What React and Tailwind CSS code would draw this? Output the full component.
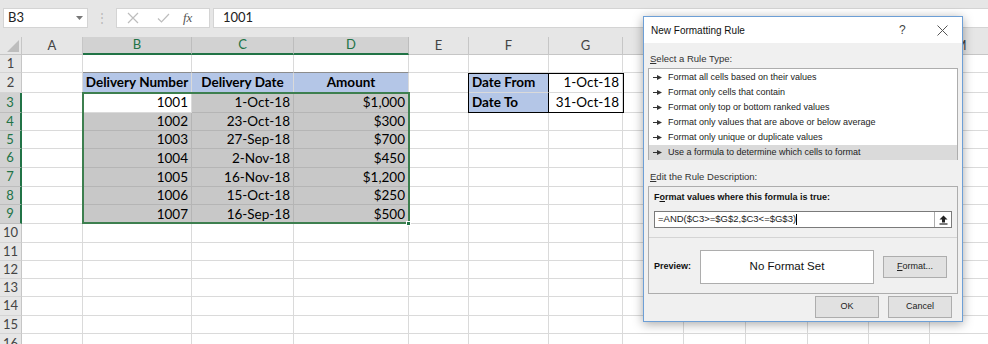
import React from "react";

// column widths are written out so tailwind picks them up
const COLS = [
  { k: "A", w: "w-[61px]" },
  { k: "B", w: "w-[109px]", sel: true },
  { k: "C", w: "w-[102px]", sel: true },
  { k: "D", w: "w-[115px]", sel: true },
  { k: "E", w: "w-[60px]" },
  { k: "F", w: "w-[80px]" },
  { k: "G", w: "w-[74px]" },
  { k: "H", w: "w-[61px]" },
  { k: "I", w: "w-[62px]" },
  { k: "J", w: "w-[62px]" },
  { k: "K", w: "w-[61px]" },
  { k: "L", w: "w-[61px]" },
  { k: "M", w: "w-[62px]" },
];

const ROW_H = [
  "h-[18px]", "h-[20px]", "h-[20px]", "h-[18px]", "h-[18px]", "h-[19px]", "h-[19px]", "h-[18px]",
  "h-[19px]", "h-[19px]", "h-[18px]", "h-[18px]", "h-[18px]", "h-[19px]", "h-[18px]", "h-[20px]",
];

const deliveries = [
  ["1001", "1-Oct-18", "$1,000"],
  ["1002", "23-Oct-18", "$300"],
  ["1003", "27-Sep-18", "$700"],
  ["1004", "2-Nov-18", "$450"],
  ["1005", "16-Nov-18", "$1,200"],
  ["1006", "15-Oct-18", "$250"],
  ["1007", "16-Sep-18", "$500"],
];

const rules = [
  "Format all cells based on their values",
  "Format only cells that contain",
  "Format only top or bottom ranked values",
  "Format only values that are above or below average",
  "Format only unique or duplicate values",
  "Use a formula to determine which cells to format",
];

const cellAt = (row, col) => {
  if (row === 2) {
    if (col === "B") return { text: "Delivery Number", bold: true, align: "center", fill: "bg-[#b4c6e7]" };
    if (col === "C") return { text: "Delivery Date", bold: true, align: "center", fill: "bg-[#b4c6e7]" };
    if (col === "D") return { text: "Amount", bold: true, align: "center", fill: "bg-[#b4c6e7]" };
    if (col === "F") return { text: "Date From", bold: true, align: "left", fill: "bg-[#b4c6e7]" };
    if (col === "G") return { text: "1-Oct-18", align: "right" };
  }
  if (row === 3) {
    if (col === "F") return { text: "Date To", bold: true, align: "left", fill: "bg-[#b4c6e7]" };
    if (col === "G") return { text: "31-Oct-18", align: "right" };
  }
  if (row >= 3 && row <= 9 && ["B", "C", "D"].includes(col)) {
    const d = deliveries[row - 3];
    const i = ["B", "C", "D"].indexOf(col);
    return {
      text: d[i],
      align: "right",
      fill: row === 3 && col === "B" ? "bg-white" : "bg-[#c8c8c8]",
      dark: !(row === 3 && col === "B"),
    };
  }
  return {};
};

const RuleArrow = () => (
  <svg width="9" height="5" viewBox="0 0 9 5" className="shrink-0">
    <path d="M0 2.5h5" stroke="#333" strokeWidth="1" />
    <path d="M4 0l5 2.5-5 2.5z" fill="#333" />
  </svg>
);

const FormulaBar = () => (
  <div className="h-[37px] bg-[#e6e6e6] flex items-start pt-[8px] pl-[3px]">
    <div className="w-[85px] h-[20px] bg-white border border-[#d4d4d4] flex items-center justify-between px-[4px] text-[13px] text-[#222]">
      <span>B3</span>
      <svg width="7" height="4" viewBox="0 0 7 4"><path d="M0 0h7L3.5 4z" fill="#777" /></svg>
    </div>
    <div className="w-[28px] h-[20px] flex items-center justify-center text-[#b8b8b8] text-[12px]">⋮</div>
    <div className="w-[94px] h-[20px] bg-white border border-[#d4d4d4] flex items-center">
      <svg width="12" height="12" viewBox="0 0 12 12" className="ml-[10px]">
        <path d="M1 1l10 10M11 1L1 11" stroke="#bdbdbd" strokeWidth="1.2" />
      </svg>
      <svg width="13" height="12" viewBox="0 0 13 12" className="ml-[18px]">
        <path d="M1 6.5l3.5 3.5L12 2" stroke="#bdbdbd" strokeWidth="1.2" fill="none" />
      </svg>
      <span className="ml-[13px] text-[13px] italic text-[#555] font-['Liberation_Serif',serif]">fx</span>
    </div>
    <div className="ml-[3px] flex-1 h-[20px] bg-white border border-[#d4d4d4] border-r-0 flex items-center pl-[9px] text-[13px] text-[#222]">
      1001
    </div>
  </div>
);

const Sheet = () => (
  <div className="relative font-['Lato',sans-serif] text-[13.5px] text-black">
    {/* column headers */}
    <div className="flex h-[18px]">
      <div className="w-[22px] shrink-0 bg-[#e6e6e6] border-r border-b border-[#c6c6c6] flex items-end justify-end p-[2px]">
        <svg width="12" height="12" viewBox="0 0 12 12"><path d="M12 0v12H0z" fill="#bdbdbd" /></svg>
      </div>
      {COLS.map((c) => (
        <div
          key={c.k}
          className={`${c.w} shrink-0 flex items-center justify-center text-[13px] ${
            c.sel
              ? "bg-[#d2d2d2] text-[#217346] border-b-2 border-b-[#217346] border-r border-r-[#bdbdbd]"
              : "bg-[#e6e6e6] text-[#444] border-b border-r border-[#c6c6c6]"
          }`}
        >
          {c.k}
        </div>
      ))}
    </div>
    {ROW_H.map((h, ri) => {
      const row = ri + 1;
      const rowSel = row >= 3 && row <= 9;
      return (
        <div key={row} className={`flex ${h}`}>
          <div
            className={`w-[22px] shrink-0 flex items-center justify-center text-[13px] border-b ${
              rowSel
                ? "bg-[#d2d2d2] text-[#217346] border-b-[#bdbdbd] border-r-2 border-r-[#217346]"
                : "bg-[#e6e6e6] text-[#444] border-b-[#d4d4d4] border-r border-r-[#c6c6c6]"
            }`}
          >
            {row}
          </div>
          {COLS.map((c) => {
            const cell = cellAt(row, c.k);
            const boxed = (row === 2 || row === 3) && (c.k === "F" || c.k === "G");
            return (
              <div
                key={c.k}
                className={`${c.w} shrink-0 flex items-center overflow-hidden whitespace-nowrap px-[3px] border-r border-b ${
                  cell.fill || "bg-white"
                } ${cell.dark ? "border-[#b5b5b5]" : "border-[#dadada]"} ${
                  cell.align === "right" ? "justify-end" : cell.align === "center" ? "justify-center" : "justify-start"
                } ${cell.bold ? "font-bold" : ""} ${row === 2 && ["B", "C", "D"].includes(c.k) ? "border-t border-t-[#8c8c8c] -mt-px" : ""} ${
                  boxed && c.k === "F" ? "border-r-black" : ""
                }`}
              >
                {cell.text}
              </div>
            );
          })}
        </div>
      );
    })}
    {/* selection outline B3:D9 */}
    <div className="absolute left-[82px] top-[55px] w-[328px] h-[132px] border-2 border-[#3d7f4f] pointer-events-none" />
    <div className="absolute left-[406px] top-[184px] w-[5px] h-[5px] bg-[#217346] border border-white" />
    {/* black box around F2:G3 */}
    <div className="absolute left-[468px] top-[36px] w-[156px] h-[40px] border border-black pointer-events-none" />
  </div>
);

const Btn = ({ children, className = "" }) => (
  <div className={`h-[22px] w-[64px] bg-[#e1e1e1] border border-[#adadad] flex items-center justify-center text-[#222] ${className}`}>
    {children}
  </div>
);

const Dialog = () => (
  <div className="absolute left-[643px] top-[16px] w-[320px] h-[306px] bg-[#f0f0f0] border border-[#6d9fd6] shadow-[0_2px_10px_rgba(0,0,0,0.35)] font-['Liberation_Sans',Arial,sans-serif] text-[9px] text-[#222] flex flex-col">
    <div className="h-[26px] bg-white flex items-center pl-[7px] text-[10px] text-[#111]">
      <span className="flex-1">New Formatting Rule</span>
      <span className="w-[18px] text-[#444] text-[12px]">?</span>
      <svg width="11" height="11" viewBox="0 0 11 11" className="ml-[20px] mr-[14px]">
        <path d="M0.5 0.5l10 10M10.5 0.5l-10 10" stroke="#555" strokeWidth="1" />
      </svg>
    </div>
    <div className="px-[4px] pt-[9px]">
      <div className="h-[14px] flex items-center pl-[2px] text-[#333] text-[9.5px]">
        <span><u>S</u>elect a Rule Type:</span>
      </div>
      <div className="mt-[2px] h-[92px] bg-white border border-[#adadad] py-px">
        {rules.map((r, i) => (
          <div
            key={r}
            className={`h-[15px] flex items-center gap-[6px] pl-[4px] ${i === rules.length - 1 ? "bg-[#dadada]" : ""}`}
          >
            <RuleArrow />
            <span>{r}</span>
          </div>
        ))}
      </div>
      <div className="mt-[10px] h-[14px] flex items-center pl-[2px] text-[#333] text-[9.5px]">
        <span><u>E</u>dit the Rule Description:</span>
      </div>
      <div className="mt-[2px] h-[108px] bg-[#f0f0f0] border border-[#adadad] flex flex-col">
        <div className="border-b border-[#d4d4d4] px-[5px] pt-[4px] h-[51px]">
          <div className="font-bold h-[14px] flex items-center text-[#111]">
            <span>F<u>o</u>rmat values where this formula is true:</span>
          </div>
          <div className="mt-[6px] h-[17px] bg-white border border-[#7a7a7a] flex items-center text-[9.5px]">
            <span className="pl-[3px] flex-1">=AND($C3&gt;=$G$2,$C3&lt;=$G$3)<span className="inline-block w-px h-[11px] bg-black align-middle" /></span>
            <div className="w-[17px] h-[15px] border-l border-[#adadad] flex items-center justify-center">
              <svg width="9" height="10" viewBox="0 0 9 10">
                <path d="M4.5 0.5L8.5 4.5H6v3H3v-3H0.5z" fill="#222" />
                <path d="M0.5 9h8" stroke="#222" strokeWidth="1.2" />
              </svg>
            </div>
          </div>
        </div>
        <div className="flex-1 flex items-center px-[5px] pt-[2px]">
          <span className="w-[46px] font-bold text-[#111]">Preview:</span>
          <div className="w-[174px] h-[34px] bg-white border border-[#adadad] flex items-center justify-center text-[11.5px] text-[#111]">
            No Format Set
          </div>
          <Btn className="ml-[9px]">
            <span><u>F</u>ormat...</span>
          </Btn>
        </div>
      </div>
      <div className="mt-[2px] flex justify-end gap-[9px] pr-[6px]">
        <Btn className="border-[#0078d7]">OK</Btn>
        <Btn>Cancel</Btn>
      </div>
    </div>
  </div>
);

export default function App() {
  return (
    <div className="w-[988px] h-[344px] relative overflow-hidden bg-white font-['Lato',sans-serif]">
      <FormulaBar />
      <Sheet />
      <Dialog />
    </div>
  );
}
